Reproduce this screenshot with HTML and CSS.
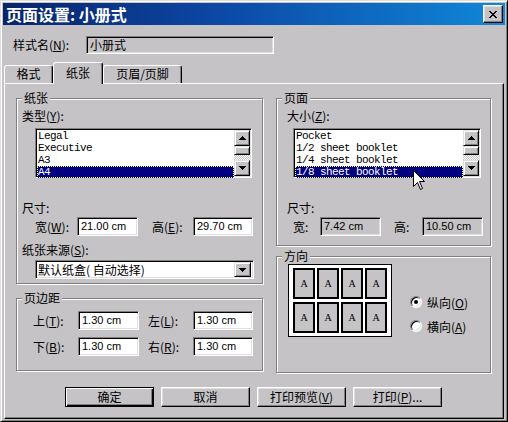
FILE: index.html
```html
<!DOCTYPE html>
<html lang="zh-CN">
<head>
<meta charset="utf-8">
<title>页面设置: 小册式</title>
<link rel="stylesheet" href="styles.css">
</head>
<body>
<div class="window">
  <div class="titlebar">
    <span class="title">页面设置: 小册式</span>
    <div class="close"><svg width="8" height="7" viewBox="0 0 8 7"><path d="M0 0h2v1h1v1h2V1h1V0h2v1H7v1H6v1H5v1h1v1h1v1h1v1H6V6H5V5H3v1H2v1H0V6h1V5h1V4h1V3H2V2H1V1H0z"/></svg></div>
  </div>

  <div class="stylerow">
    <span class="stylelabel">样式名(<u>N</u>):</span>
    <div class="field readonly stylefield">小册式</div>
  </div>

  <div class="tabs">
    <div class="tab t1">格式</div>
    <div class="tab sel">纸张</div>
    <div class="tab t3">页眉/页脚</div>
  </div>

  <div class="panel">
    <div class="columns">
      <div class="col">
        <div class="group g-paper">
          <div class="gtitle">纸张</div>
          <div class="lbl first">类型(<u>Y</u>):</div>
          <div class="listbox lb-left">
            <ul class="items">
              <li>Legal</li>
              <li>Executive</li>
              <li>A3</li>
              <li class="selected">A4</li>
            </ul>
            <div class="vscroll">
              <div class="sbtn"><svg width="7" height="4" viewBox="0 0 7 4"><path d="M3 0h1v1h1v1h1v1h1v1H0V3h1V2h1V1h1z"/></svg></div>
              <div class="thumb"></div>
              <div class="track"></div>
              <div class="sbtn"><svg width="7" height="4" viewBox="0 0 7 4"><path d="M0 0h7v1H6v1H5v1H4v1H3V3H2V2H1V1H0z"/></svg></div>
            </div>
          </div>
          <div class="lbl size-lbl">尺寸:</div>
          <div class="row paper-row">
            <span class="rl w42">宽(<u>W</u>):</span>
            <div class="field edit w61">21.00 cm</div>
            <span class="rl w41 ml14">高(<u>E</u>):</span>
            <div class="field edit w60">29.70 cm</div>
          </div>
          <div class="lbl source-lbl">纸张来源(<u>S</u>):</div>
          <div class="field combo">
            <span class="combo-text">默认纸盒( 自动选择)</span>
            <div class="sbtn combo-btn"><svg width="7" height="4" viewBox="0 0 7 4"><path d="M0 0h7v1H6v1H5v1H4v1H3V3H2V2H1V1H0z"/></svg></div>
          </div>
        </div>

        <div class="group g-margins">
          <div class="gtitle">页边距</div>
          <div class="row mrow r1">
            <span class="rl w45">上(<u>T</u>):</span>
            <div class="field edit w61">1.30 cm</div>
            <span class="rl w45 ml9">左(<u>L</u>):</span>
            <div class="field edit w60">1.30 cm</div>
          </div>
          <div class="row mrow r2">
            <span class="rl w45">下(<u>B</u>):</span>
            <div class="field edit w61">1.30 cm</div>
            <span class="rl w45 ml9">右(<u>R</u>):</span>
            <div class="field edit w60">1.30 cm</div>
          </div>
        </div>
      </div>

      <div class="col">
        <div class="group g-page">
          <div class="gtitle">页面</div>
          <div class="lbl first indent">大小(<u>Z</u>):</div>
          <div class="listbox lb-right">
            <ul class="items">
              <li>Pocket</li>
              <li>1/2 sheet booklet</li>
              <li>1/4 sheet booklet</li>
              <li class="selected">1/8 sheet booklet</li>
            </ul>
            <div class="vscroll">
              <div class="sbtn"><svg width="7" height="4" viewBox="0 0 7 4"><path d="M3 0h1v1h1v1h1v1h1v1H0V3h1V2h1V1h1z"/></svg></div>
              <div class="thumb"></div>
              <div class="track"></div>
              <div class="sbtn"><svg width="7" height="4" viewBox="0 0 7 4"><path d="M0 0h7v1H6v1H5v1H4v1H3V3H2V2H1V1H0z"/></svg></div>
            </div>
          </div>
          <div class="lbl size-lbl indent">尺寸:</div>
          <div class="row page-row">
            <span class="rl w27">宽:</span>
            <div class="field edit readonly w61">7.42 cm</div>
            <span class="rl w28 ml13">高:</span>
            <div class="field edit readonly w61">10.50 cm</div>
          </div>
        </div>

        <div class="group g-orient">
          <div class="gtitle">方向</div>
          <div class="orient">
            <div class="pic">
              <div class="pg">A</div><div class="pg">A</div><div class="pg">A</div><div class="pg">A</div>
              <div class="pg">A</div><div class="pg">A</div><div class="pg">A</div><div class="pg">A</div>
            </div>
            <div class="radios">
              <div class="radio-row"><span class="radio checked"></span><span>纵向(<u>O</u>)</span></div>
              <div class="radio-row second"><span class="radio"></span><span>横向(<u>A</u>)</span></div>
            </div>
          </div>
        </div>
      </div>
    </div>

    <div class="buttons">
      <div class="btn default">确定</div>
      <div class="btn">取消</div>
      <div class="btn">打印预览(<u>V</u>)</div>
      <div class="btn">打印(<u>P</u>)...</div>
    </div>
  </div>

  <svg class="cursor" width="12" height="20" viewBox="0 0 12 20"><path d="M0.5 0.5V16.5L4.5 12.5L7.5 19.5L9.5 18.5L6.5 11.5H11.5Z" fill="#fff" stroke="#000" stroke-width="1"/></svg>
</div>
</body>
</html>
```

FILE: styles.css
```css
* { box-sizing: border-box; }
html, body { margin: 0; padding: 0; }
body {
  background: #c5c3c6;
  font-family: "Noto Sans CJK SC", "Liberation Sans", sans-serif;
  font-size: 12px;
  color: #000;
}
u { text-decoration: underline; text-underline-offset: 1px; }

.window {
  position: relative;
  width: 508px;
  height: 422px;
  background: #c5c3c6;
  border: 1px solid;
  border-color: #dfdfdf #000 #000 #dfdfdf;
  box-shadow: inset 1px 1px #fff, inset -1px -1px #808080;
  padding: 2px;
  display: flex;
  flex-direction: column;
}

.titlebar {
  height: 22px;
  flex: none;
  display: flex;
  align-items: center;
  justify-content: space-between;
  background: linear-gradient(to right, #08246b 0%, #0c4aa8 45%, #1088d8 100%);
}
.title {
  color: #fff;
  font-weight: bold;
  font-size: 16px;
  line-height: 22px;
  padding-left: 3px;
}
.close {
  width: 20px;
  height: 18px;
  margin-right: 2px;
  background: #c5c3c6;
  border: 1px solid;
  border-color: #fff #000 #000 #fff;
  box-shadow: inset -1px -1px #808080, inset 1px 1px #dfdfdf;
  display: flex;
  align-items: center;
  justify-content: center;
}
.close svg { display: block; }

.stylerow {
  flex: none;
  margin-top: 11px;
  height: 18px;
  display: flex;
  align-items: center;
  padding-left: 10px;
}
.stylelabel { width: 73px; line-height: 14px; }

.field {
  height: 19px;
  border: 1px solid;
  border-color: #808080 #fff #fff #808080;
  box-shadow: inset 1px 1px #000, inset -1px -1px #dfdfdf;
  background: #fff;
  padding-left: 3px;
  line-height: 17px;
  white-space: nowrap;
}
.readonly { background: #c5c3c6; }
.stylefield { width: 188px; height: 18px; line-height: 16px; }

.edit {
  font-family: "Liberation Sans", sans-serif;
  font-size: 11px;
  padding-left: 3px;
}

.tabs {
  flex: none;
  margin-top: 8px;
  height: 21px;
  display: flex;
  align-items: flex-end;
  padding-left: 1px;
}
.tab {
  height: 18px;
  border: 1px solid;
  border-color: #fff #000 transparent #fff;
  border-bottom: 0;
  border-radius: 3px 3px 0 0;
  box-shadow: inset -1px 0 #808080;
  text-align: center;
  line-height: 16px;
  background: #c5c3c6;
}
.t1 { width: 49px; }
.t3 { width: 79px; }
.tab.sel {
  width: 50px;
  height: 22px;
  margin-bottom: -1px;
  line-height: 20px;
  position: relative;
  z-index: 1;
}

.panel {
  flex: 1;
  margin-left: 1px;
  width: 500px;
  border: 1px solid;
  border-color: #fff #000 #000 #fff;
  box-shadow: inset -1px -1px #808080;
}

.columns {
  display: grid;
  grid-template-columns: 247px 215px;
  column-gap: 13px;
  padding: 14px 0 0 11px;
  align-items: start;
}

.group {
  border: 1px solid #808080;
  box-shadow: 1px 1px #fff, inset 1px 1px #fff;
  padding-left: 5px;
}
.gtitle {
  margin-top: -8px;
  width: fit-content;
  padding: 0 2px;
  background: #c5c3c6;
  height: 14px;
  line-height: 14px;
}
.lbl { height: 14px; line-height: 14px; }
.lbl.first { margin-top: 4px; }
.lbl.indent { margin-left: 5px; }
.size-lbl { margin-top: 23px; }
.source-lbl { margin-top: 7px; }

.g-paper { padding-bottom: 4px; }
.g-margins { margin-top: 14px; padding-bottom: 14px; }
.g-page { padding-bottom: 9px; }
.g-orient { margin-top: 10px; padding-bottom: 35px; }

.listbox {
  margin-top: 5px;
  height: 50px;
  display: flex;
  border: 1px solid;
  border-color: #808080 #fff #fff #808080;
  box-shadow: inset 1px 1px #000, inset -1px -1px #dfdfdf;
  background: #fff;
  padding: 1px;
}
.lb-left { margin-left: 13px; width: 217px; }
.lb-right { margin-left: 11px; width: 188px; }
.items {
  flex: 1;
  list-style: none;
  margin: 0;
  padding: 0;
  font-family: "Liberation Mono", monospace;
  font-size: 11px;
  letter-spacing: -0.6px;
}
.items li {
  height: 12px;
  line-height: 12px;
  padding-left: 1px;
  white-space: nowrap;
}
.items li.selected {
  background: #000080;
  color: #fff;
  outline: 1px dotted #ffffa0;
  outline-offset: -1px;
}

.vscroll {
  width: 16px;
  display: flex;
  flex-direction: column;
}
.sbtn {
  width: 16px;
  height: 16px;
  flex: none;
  background: #c5c3c6;
  border: 1px solid;
  border-color: #dfdfdf #000 #000 #dfdfdf;
  box-shadow: inset 1px 1px #fff, inset -1px -1px #808080;
  display: flex;
  align-items: center;
  justify-content: center;
}
.sbtn svg { display: block; }
.thumb {
  height: 9px;
  flex: none;
  background: #c5c3c6;
  border: 1px solid;
  border-color: #dfdfdf #000 #000 #dfdfdf;
  box-shadow: inset 1px 1px #fff, inset -1px -1px #808080;
}
.track {
  flex: 1;
  background: repeating-conic-gradient(#fff 0 25%, #c5c3c6 0 50%) 0 0 / 2px 2px;
}

.row {
  display: flex;
  align-items: center;
  height: 19px;
  margin-top: 2px;
}
.paper-row { padding-left: 13px; }
.page-row { padding-left: 11px; }
.mrow { margin-left: 11px; }
.mrow.r1 { margin-top: 6px; }
.mrow.r2 { margin-top: 7px; }
.rl { line-height: 14px; white-space: nowrap; }
.w27 { width: 27px; }
.w28 { width: 28px; }
.w41 { width: 41px; }
.w42 { width: 42px; }
.w45 { width: 45px; }
.w60 { width: 60px; }
.w61 { width: 61px; }
.ml9 { margin-left: 9px; }
.ml13 { margin-left: 13px; }
.ml14 { margin-left: 14px; }

.combo {
  margin-top: 3px;
  margin-left: 13px;
  width: 219px;
  display: flex;
  align-items: center;
  justify-content: space-between;
  padding: 2px;
}
.combo-text { line-height: 14px; }
.combo-btn { width: 17px; height: 15px; }

.orient { display: flex; align-items: flex-start; }
.pic {
  margin: 1px 0 0 6px;
  width: 104px;
  height: 73px;
  border: 1px solid #000;
  background: #fff;
  padding: 3px 4px;
  display: grid;
  grid-template-columns: repeat(4, 22px);
  grid-template-rows: 31px 31px;
  gap: 3px 2px;
}
.pg {
  border: 2px solid #000;
  background: #c5c3c6;
  display: flex;
  align-items: center;
  justify-content: center;
  font-family: "Liberation Serif", serif;
  font-size: 10px;
  line-height: 10px;
}
.radios { margin: 31px 0 0 18px; }
.radio-row {
  display: flex;
  align-items: center;
  height: 16px;
  gap: 5px;
}
.radio-row.second { margin-top: 8px; }
.radio {
  width: 12px;
  height: 12px;
  border-radius: 50%;
  border: 1px solid;
  border-color: #808080 #fff #fff #808080;
  background: #fff;
  box-shadow: inset 1px 1px #000, inset -1px -1px #dfdfdf;
  display: flex;
  align-items: center;
  justify-content: center;
}
.radio.checked::after {
  content: "";
  width: 4px;
  height: 4px;
  border-radius: 50%;
  background: #000;
}

.buttons {
  display: flex;
  gap: 7px;
  margin-top: 14px;
  padding-left: 60px;
}
.btn {
  width: 89px;
  height: 20px;
  background: #c5c3c6;
  border: 1px solid;
  border-color: #fff #000 #000 #fff;
  box-shadow: inset -1px -1px #808080, inset 1px 1px #dfdfdf;
  text-align: center;
  line-height: 18px;
  white-space: nowrap;
}
.btn.default {
  border-color: #000;
  box-shadow: inset 1px 1px #fff, inset -1px -1px #000, inset -2px -2px #808080;
}

.cursor {
  position: absolute;
  left: 412px;
  top: 169px;
  display: block;
}
```
